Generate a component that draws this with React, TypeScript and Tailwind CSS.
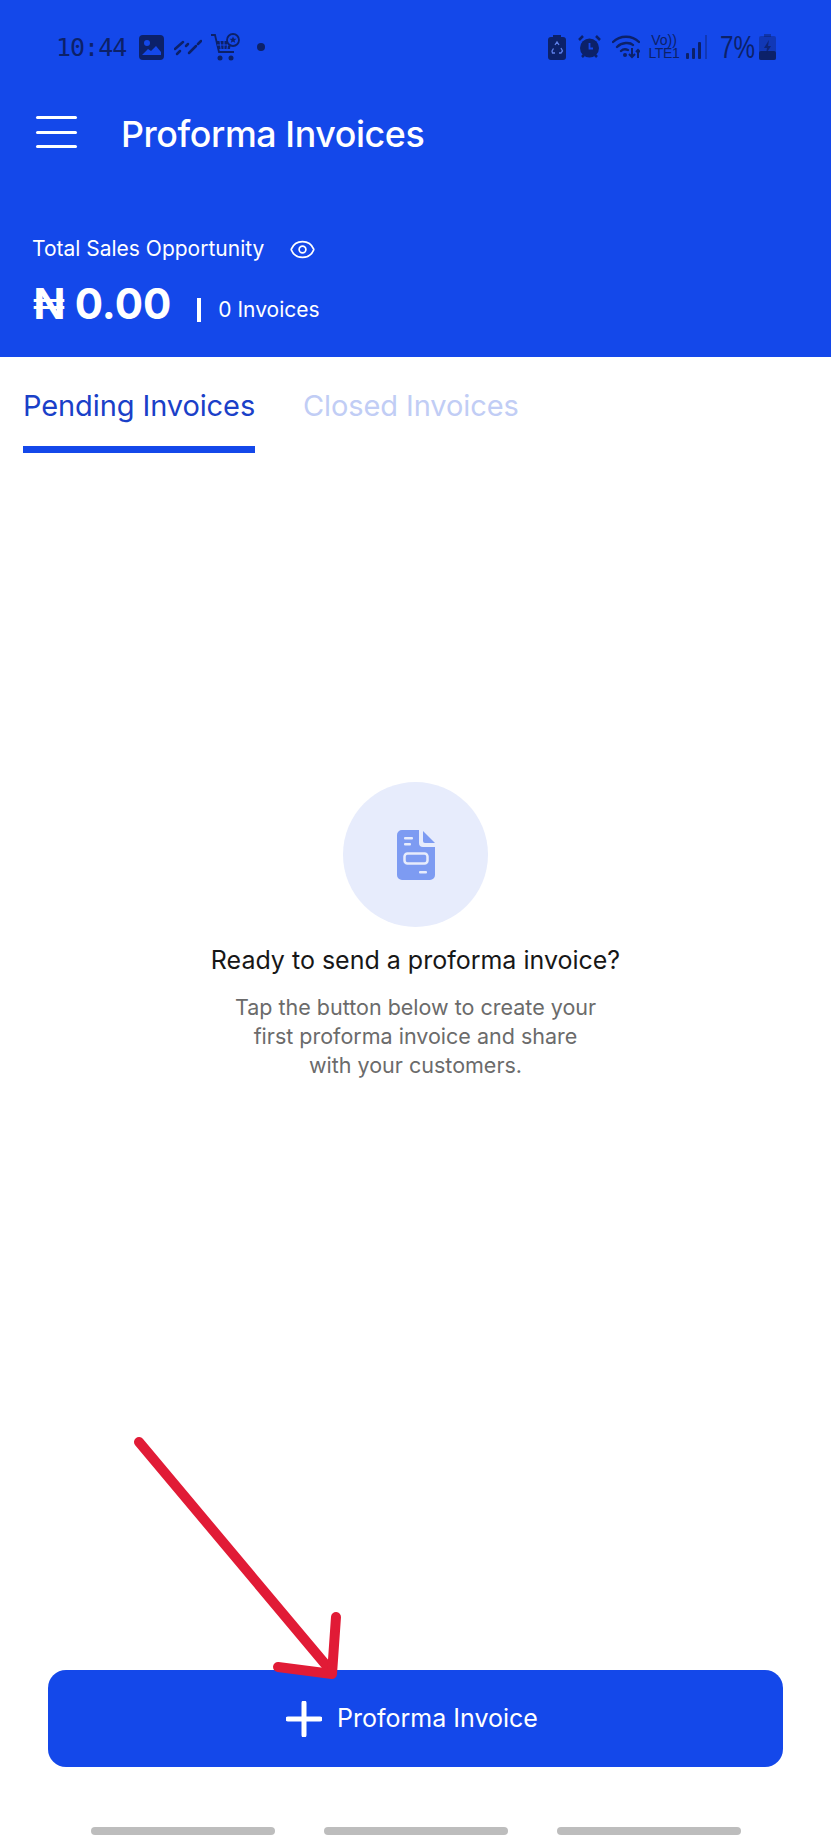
import React from 'react';
import { Eye } from 'lucide-react';

const navy = '#0c2169';

const StatusLeft = () => (
  <div className="flex items-center">
    <span className="font-['DejaVu_Sans_Mono',monospace] text-[25px] leading-none tracking-[-1px] text-[#0c2169] w-[70px]">10:44</span>
    {/* picture icon */}
    <svg width="25" height="25" viewBox="0 0 25 25" className="ml-[13px]">
      <rect width="25" height="25" rx="4" fill={navy} />
      <circle cx="8" cy="8" r="3" fill="#1448ea" />
      <path d="M3 20l6-6 3 2 5-5 5 6v3H3z" fill="#1448ea" />
    </svg>
    {/* missed data streaks */}
    <svg width="28" height="18" viewBox="0 0 28 18" className="ml-[10px]">
      <g stroke={navy} strokeWidth="2.5" strokeLinecap="round">
        <path d="M1 11L9 4" />
        <path d="M3 16L6 13" />
        <path d="M15 15L22 8" />
        <path d="M12 8L14 6" />
        <path d="M24 6L27 3" />
      </g>
    </svg>
    {/* shopping cart */}
    <svg width="30" height="28" viewBox="0 0 30 28" className="ml-[8px]" fill="none">
      <path d="M1 2h4l4 17h15" stroke={navy} strokeWidth="1.8" />
      <path d="M6 8h15l-1 8H8z" fill={navy} />
      <path d="M10 8l1 8M14 8v8M18 8l-1 8M7 12h14" stroke="#1448ea" strokeWidth="1" />
      <circle cx="10" cy="25" r="2.5" fill={navy} />
      <circle cx="21" cy="25" r="2.5" fill={navy} />
      <circle cx="23" cy="7" r="6" stroke={navy} strokeWidth="1.8" fill="#1448ea" />
      <path d="M23 3.5l1 2.2h2.4l-1.9 1.7.7 2.4-2.2-1.3-2.2 1.3.7-2.4-1.9-1.7H22z" fill={navy} />
    </svg>
    <span className="ml-[17px] w-2 h-2 rounded-full bg-[#0c2169]" />
  </div>
);

const StatusRight = () => (
  <div className="flex items-center">
    <svg width="18" height="25" viewBox="0 0 18 25" fill="none">
      <rect x="5" width="8" height="3" fill={navy} />
      <rect y="2" width="18" height="23" rx="3" fill={navy} />
      <path d="M7 10l2-3 2 3M13 13l1.5 3-1.5 2h-2M7 18H4.5l-.5-2 1.5-2.5" stroke="#5d7fe8" strokeWidth="1.3" />
    </svg>
    <svg width="23" height="24" viewBox="0 0 23 24" className="ml-[12px]">
      <circle cx="11.5" cy="13" r="9.5" fill={navy} />
      <path d="M11.5 8v5.5H15" stroke="#1448ea" strokeWidth="1.8" fill="none" />
      <path d="M1 5l4-4M22 5l-4-4M4 22l2-2M19 22l-2-2" stroke={navy} strokeWidth="2.5" />
    </svg>
    <svg width="28" height="24" viewBox="0 0 28 24" fill="none" className="ml-[11px]">
      <g stroke={navy} strokeWidth="2.4" strokeLinecap="round">
        <path d="M1 7C8 0 20 0 27 7" />
        <path d="M5 12C10 7 18 7 21 10" />
        <path d="M9 16c2-2 5-2 7-1" />
      </g>
      <circle cx="13" cy="20" r="2" fill={navy} />
      <path d="M20 13v9m-3-3l3 3 3-3" stroke={navy} strokeWidth="2" />
      <path d="M26 23v-8m-2 2l2-2 2 2" stroke={navy} strokeWidth="2" />
    </svg>
    <div className="ml-[8px] w-[32px] flex flex-col items-center font-['Liberation_Sans',sans-serif] text-[#0c2169] leading-[13px]">
      <span className="text-[14px]">Vo))</span>
      <span className="text-[14px] tracking-[-0.3px]">LTE1</span>
    </div>
    <svg width="22" height="24" viewBox="0 0 22 24" className="ml-[6px]">
      <rect x="0" y="18" width="3" height="6" rx="1" fill={navy} />
      <rect x="6" y="13" width="3" height="11" rx="1" fill={navy} />
      <rect x="12" y="7" width="3" height="17" rx="1" fill={navy} />
      <rect x="19" y="0" width="2" height="24" fill={navy} opacity="0.4" />
    </svg>
    <span className="ml-[12px] font-['Liberation_Sans',sans-serif] text-[31px] leading-none text-[#0c2169] w-[39px] whitespace-nowrap origin-left scale-x-[0.78]">7%</span>
    <svg width="17" height="26" viewBox="0 0 17 26">
      <rect x="5" width="7" height="3" fill={navy} opacity="0.5" />
      <rect y="2" width="17" height="24" rx="2" fill={navy} opacity="0.4" />
      <rect y="17" width="17" height="9" rx="2" fill={navy} />
      <path d="M10 6l-5 8h3l-1 6 5-8H9z" fill={navy} opacity="0.8" />
    </svg>
  </div>
);

const DocIcon = () => (
  <svg width="38" height="50" viewBox="0 0 38 50">
    <path d="M5 0H22V13a4 4 0 0 0 4 4H38V45a5 5 0 0 1-5 5H5a5 5 0 0 1-5-5V5a5 5 0 0 1 5-5Z" fill="#7d9bf2" />
    <path d="M26 1L38 13H28a2 2 0 0 1-2-2Z" fill="#7d9bf2" />
    <rect x="7" y="7" width="9" height="2.5" rx="1" fill="#e7ecfc" />
    <rect x="7" y="13" width="7" height="2.5" rx="1" fill="#e7ecfc" />
    <rect x="7.5" y="23.5" width="23" height="10" rx="3" fill="none" stroke="#e7ecfc" strokeWidth="2.5" />
    <rect x="22" y="41" width="8" height="2.5" rx="1" fill="#e7ecfc" />
  </svg>
);

const App: React.FC = () => {
  return (
    <div className="relative w-[831px] h-[1846px] bg-white flex flex-col overflow-hidden font-['Inter',sans-serif]">
      {/* Blue header */}
      <header className="h-[357px] bg-[#1448ea] text-white flex flex-col shrink-0">
        <div className="flex justify-between items-center pl-[56px] pr-[55px] pt-[34px] h-[60px]">
          <StatusLeft />
          <StatusRight />
        </div>
        <div className="flex items-center pl-[36px] mt-[50px] h-[44px]">
          <div className="w-[41px] flex flex-col gap-[11.5px]">
            <span className="h-[3px] bg-white rounded-full" />
            <span className="h-[3px] bg-white rounded-full" />
            <span className="h-[3px] bg-white rounded-full" />
          </div>
          <h1 className="ml-[44px] mt-[3px] text-[35.8px] leading-[44px] font-medium tracking-[-0.4px]">Proforma Invoices</h1>
        </div>
        <div className="flex items-center pl-[32px] mt-[81px]">
          <span className="text-[21px] leading-[28px]">Total Sales Opportunity</span>
          <Eye size={27} strokeWidth={1.5} className="ml-[25px]" />
        </div>
        <div className="flex items-center pl-[33px] mt-[16px]">
          <span className="text-[42px] leading-[50px] font-bold">₦ 0.00</span>
          <span className="ml-[26px] mt-[12px] w-[4px] h-[24px] bg-white" />
          <span className="ml-[17px] mt-[12px] text-[21px] leading-[28px]">0 Invoices</span>
        </div>
      </header>

      {/* Tabs */}
      <nav className="flex pl-[23px] h-[96px] shrink-0 text-[29px] tracking-[-0.1px] whitespace-nowrap">
        <div className="w-[232px] h-full border-b-[7px] border-[#1448ea] text-[#1a40c8] text-center pt-[29px] leading-[40px]">Pending Invoices</div>
        <div className="ml-[48px] text-[#c1cdf5] pt-[29px] leading-[40px]">Closed Invoices</div>
      </nav>

      {/* Empty state */}
      <main className="flex-1 flex flex-col items-center pt-[329px]">
        <div className="w-[145px] h-[145px] rounded-full bg-[#e7ecfc] flex items-center justify-center">
          <DocIcon />
        </div>
        <h2 className="mt-[17px] text-[25px] leading-[32px] text-[#171717]">Ready to send a proforma invoice?</h2>
        <p className="mt-[17px] text-[21.5px] leading-[29px] text-[#6b6b6b] text-center">
          Tap the button below to create your<br />first proforma invoice and share<br />with your customers.
        </p>
      </main>

      {/* Create button */}
      <div className="px-[48px] shrink-0">
        <button className="w-full h-[97px] rounded-[18px] bg-[#1448ea] text-white flex items-center justify-center pr-[7px]">
          <svg width="36" height="36" viewBox="0 0 36 36" stroke="white" strokeWidth="5" strokeLinecap="round">
            <path d="M18 2v32M2 18h32" />
          </svg>
          <span className="ml-[15px] text-[25px]">Proforma Invoice</span>
        </button>
      </div>

      {/* Nav bar handles */}
      <div className="flex pl-[91px] gap-[49px] pt-[60px] pb-[11px] shrink-0">
        <span className="w-[184px] h-[8px] rounded-full bg-[#bdbdbd]" />
        <span className="w-[184px] h-[8px] rounded-full bg-[#bdbdbd]" />
        <span className="w-[184px] h-[8px] rounded-full bg-[#bdbdbd]" />
      </div>

      {/* Red annotation arrow */}
      <svg className="absolute left-[120px] top-[1425px]" width="240" height="270" viewBox="120 1425 240 270" fill="none" stroke="#e11b36" strokeWidth="10" strokeLinecap="round" strokeLinejoin="round">
        <path d="M139 1442L331 1671" />
        <path d="M336 1617L332 1674L278 1667" />
      </svg>
    </div>
  );
};

export default App;
